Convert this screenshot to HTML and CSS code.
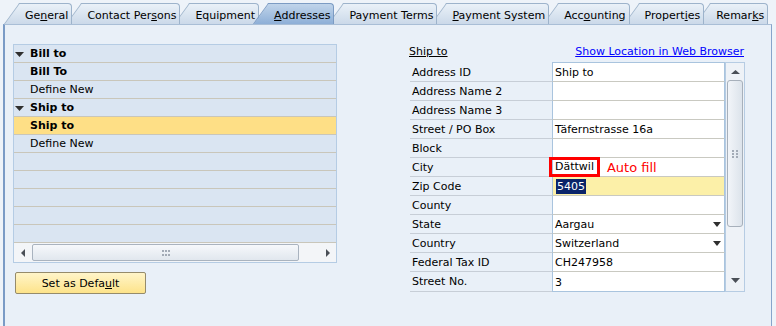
FILE: index.html
```html
<!DOCTYPE html>
<html lang="en">
<head>
<meta charset="UTF-8">
<title>Business Partner - Addresses</title>
<link rel="stylesheet" href="styles.css">
</head>
<body>
<div class="tabs">
    <div class="tab">Ge<u>n</u>eral</div>
    <div class="tab">Contact Per<u>s</u>ons</div>
    <div class="tab">Equipment</div>
    <div class="tab active"><u>A</u>ddresses</div>
    <div class="tab">Payment Terms</div>
    <div class="tab"><u>P</u>ayment System</div>
    <div class="tab">Acc<u>o</u>unting</div>
    <div class="tab">Propert<u>i</u>es</div>
    <div class="tab">Remar<u>k</u>s</div>
</div>

<div class="panel">
    <div class="left">
        <div class="list">
            <div class="row group"><svg width="9" height="5" viewBox="0 0 9 5"><path d="M0 0h9L4.5 5z" fill="#2f2f2f"/></svg>Bill to</div>
            <div class="row bold">Bill To</div>
            <div class="row">Define New</div>
            <div class="row group"><svg width="9" height="5" viewBox="0 0 9 5"><path d="M0 0h9L4.5 5z" fill="#2f2f2f"/></svg>Ship to</div>
            <div class="row bold selected">Ship to</div>
            <div class="row">Define New</div>
            <div class="row"></div>
            <div class="row"></div>
            <div class="row"></div>
            <div class="row"></div>
            <div class="row"></div>
            <div class="hscroll">
                <div class="harrow"><svg width="4" height="8" viewBox="0 0 4 8"><path d="M4 0v8L0 4z" fill="#4a4f57"/></svg></div>
                <div class="hthumb"><svg width="8" height="6" viewBox="0 0 8 6"><g fill="#a3abb6"><rect x="0" y="0" width="2" height="2"/><rect x="3" y="0" width="2" height="2"/><rect x="6" y="0" width="2" height="2"/><rect x="0" y="4" width="2" height="2"/><rect x="3" y="4" width="2" height="2"/><rect x="6" y="4" width="2" height="2"/></g></svg></div>
                <div class="htrack"></div>
                <div class="harrow"><svg width="4" height="8" viewBox="0 0 4 8"><path d="M0 0v8L4 4z" fill="#4a4f57"/></svg></div>
            </div>
        </div>
        <button class="btn">Set as Defa<u>u</u>lt</button>
    </div>

    <div class="right">
        <div class="head">
            <span class="title">Ship to</span>
            <a class="link" href="#">Show Location in Web Browser</a>
        </div>
        <div class="form">
            <div class="fields">
                <div class="frow"><div class="lbl">Address ID</div><div class="val">Ship to</div></div>
                <div class="frow"><div class="lbl">Address Name 2</div><div class="val"></div></div>
                <div class="frow"><div class="lbl">Address Name 3</div><div class="val"></div></div>
                <div class="frow"><div class="lbl">Street / PO Box</div><div class="val">Täfernstrasse 16a</div></div>
                <div class="frow"><div class="lbl">Block</div><div class="val"></div></div>
                <div class="frow"><div class="lbl">City</div><div class="val"><span class="hl">Dättwil</span><span class="note">Auto fill</span></div></div>
                <div class="frow"><div class="lbl">Zip Code</div><div class="val zip"><span class="sel">5405</span></div></div>
                <div class="frow"><div class="lbl">County</div><div class="val"></div></div>
                <div class="frow"><div class="lbl">State</div><div class="val dd">Aargau<svg width="8" height="5" viewBox="0 0 8 5"><path d="M0 0h8L4 5z" fill="#2f2f2f"/></svg></div></div>
                <div class="frow"><div class="lbl">Country</div><div class="val dd">Switzerland<svg width="8" height="5" viewBox="0 0 8 5"><path d="M0 0h8L4 5z" fill="#2f2f2f"/></svg></div></div>
                <div class="frow"><div class="lbl">Federal Tax ID</div><div class="val">CH247958</div></div>
                <div class="frow"><div class="lbl">Street No.</div><div class="val">3</div></div>
            </div>
            <div class="vscroll">
                <div class="varrow"><svg width="9" height="4" viewBox="0 0 9 4"><path d="M4.5 0L9 4H0z" fill="#4a4f57"/></svg></div>
                <div class="vthumb"><svg width="6" height="8" viewBox="0 0 6 8"><g fill="#a3abb6"><rect x="0" y="0" width="2" height="2"/><rect x="4" y="0" width="2" height="2"/><rect x="0" y="3" width="2" height="2"/><rect x="4" y="3" width="2" height="2"/><rect x="0" y="6" width="2" height="2"/><rect x="4" y="6" width="2" height="2"/></g></svg></div>
                <div class="vtrack"></div>
                <div class="varrow"><svg width="9" height="5" viewBox="0 0 9 5"><path d="M0 0h9L4.5 5z" fill="#4a4f57"/></svg></div>
            </div>
        </div>
    </div>
</div>
</body>
</html>
```

FILE: styles.css
```css
body {
    margin: 0;
    font-family: "DejaVu Sans", sans-serif;
    font-size: 11px;
    color: #000;
    background-color: #eef3f9;
}
u {
    text-decoration: underline;
}

/* tab strip */
.tabs {
    display: flex;
    align-items: flex-end;
    height: 24px;
    padding-left: 10px;
}
.tab {
    position: relative;
    box-sizing: border-box;
    height: 21px;
    margin-left: 10px;
    padding: 3px 3px 0 5px;
    line-height: 17px;
    white-space: nowrap;
    border-top: 1px solid #9db3cb;
    border-right: 1px solid #9db3cb;
    border-top-right-radius: 4px;
    background: linear-gradient(#eaf1f8, #cbd9e9);
}
.tab:last-child {
    margin-left: 7px;
}
.tab::before {
    content: "";
    position: absolute;
    top: -1px;
    bottom: 0;
    left: -16px;
    width: 24px;
    border-top: 1px solid #9db3cb;
    border-left: 1px solid #9db3cb;
    background: linear-gradient(#eaf1f8, #cbd9e9);
    transform: skewX(-36deg);
    transform-origin: bottom left;
    z-index: -1;
}
.tab:nth-child(1) { z-index: 9; }
.tab:nth-child(2) { z-index: 8; }
.tab:nth-child(3) { z-index: 7; }
.tab:nth-child(4) { z-index: 6; }
.tab:nth-child(5) { z-index: 5; }
.tab:nth-child(6) { z-index: 4; }
.tab:nth-child(7) { z-index: 3; }
.tab:nth-child(8) { z-index: 2; }
.tab:nth-child(9) { z-index: 1; }
.tab.active {
    z-index: 20;
    border-color: #7b9bc3;
    background: linear-gradient(#c0d4ea, #8eafd7);
}
.tab.active::before {
    border-color: #7b9bc3;
    background: linear-gradient(#c0d4ea, #8eafd7);
}

/* main panel */
.panel {
    display: grid;
    grid-template-columns: 324px 336px;
    column-gap: 72px;
    align-items: start;
    box-sizing: border-box;
    width: 769px;
    height: 302px;
    margin-left: 3px;
    padding: 19px 0 0 8px;
    border-top: 1px solid #a9bed6;
    border-left: 2px solid #7a9bc6;
    border-right: 1px solid #86a4cb;
    background-color: #e9f0f8;
}
.left {
    min-width: 0;
}
.right {
    min-width: 0;
    margin-top: -2px;
}

/* address list */
.list {
    box-sizing: border-box;
    width: 324px;
    border: 1px solid #b5cce4;
}
.row {
    box-sizing: border-box;
    height: 18px;
    padding: 1px 0 0 16px;
    line-height: 16px;
    border-bottom: 1px solid #c9c6ba;
    background-color: #dae5f2;
}
.row.group {
    display: flex;
    align-items: center;
    gap: 6px;
    padding-left: 1px;
    font-weight: bold;
}
.row.bold {
    font-weight: bold;
}
.row.selected {
    background-color: #fedf86;
}
.hscroll {
    display: grid;
    grid-template-columns: 18px 267px minmax(0, 1fr) 17px;
    height: 19px;
    background-color: #f3f5f8;
}
.harrow {
    display: flex;
    align-items: center;
    justify-content: center;
}
.hthumb {
    display: flex;
    align-items: center;
    justify-content: center;
    box-sizing: border-box;
    margin: 1px 0;
    border: 1px solid #a9b3bf;
    border-radius: 2px;
    background: linear-gradient(#f6f8fb, #e1e7ee);
}
.btn {
    display: block;
    box-sizing: border-box;
    width: 131px;
    height: 22px;
    margin: 9px 0 0 2px;
    padding: 0;
    font: inherit;
    color: #000;
    border: 1px solid #958b6b;
    border-radius: 2px;
    background: linear-gradient(#fff5c9, #fde38a);
}

/* address details */
.head {
    display: flex;
    justify-content: space-between;
    height: 20px;
    line-height: 20px;
    padding-right: 1px;
}
.title {
    text-decoration: underline;
}
.link {
    color: #0000ff;
    text-decoration: underline;
}
.form {
    display: grid;
    grid-template-columns: 315px 20px;
    margin-left: 1px;
}
.frow {
    display: grid;
    grid-template-columns: 142px 173px;
    height: 19px;
}
.frow:first-child,
.frow:last-child {
    height: 20px;
}
.lbl {
    padding: 1px 0 0 2px;
    line-height: 17px;
    border-bottom: 1px solid #c7ced7;
}
.val {
    display: flex;
    align-items: center;
    padding: 1px 0 0 2px;
    white-space: nowrap;
    background-color: #fff;
    border-style: solid;
    border-color: #a9c4de;
    border-width: 0 1px 1px;
    border-bottom-color: #c9c9c1;
}
.frow:first-child .lbl {
    border-top: 1px solid transparent;
}
.frow:first-child .val {
    border-top-width: 1px;
}
.frow:last-child .val {
    border-bottom-color: #a9c4de;
}
.val.zip {
    background-color: #fcf0a8;
}
.val.dd {
    justify-content: space-between;
    padding-right: 3px;
}
.sel {
    margin-left: 1px;
    padding: 0 1px;
    line-height: 15px;
    color: #fff;
    background-color: #0b2469;
}
.hl {
    box-sizing: border-box;
    height: 20px;
    margin: -2px 0 -1px -6px;
    padding: 0 3px;
    line-height: 14px;
    border: 3px solid #ff0000;
}
.note {
    margin-left: 7px;
    font-size: 13px;
    color: #ff0000;
}
.vscroll {
    display: grid;
    grid-template-rows: 17px 147px minmax(0, 1fr) 21px;
    box-sizing: border-box;
    height: 230px;
    border: 1px solid #b6cce3;
    background-color: #eef2f7;
}
.varrow {
    display: flex;
    align-items: center;
    justify-content: center;
}
.vthumb {
    display: flex;
    align-items: center;
    justify-content: center;
    box-sizing: border-box;
    margin: 0 1px;
    border: 1px solid #a7b0bb;
    border-radius: 3px;
    background: linear-gradient(to right, #f2f5f9, #dce3eb);
}
```
